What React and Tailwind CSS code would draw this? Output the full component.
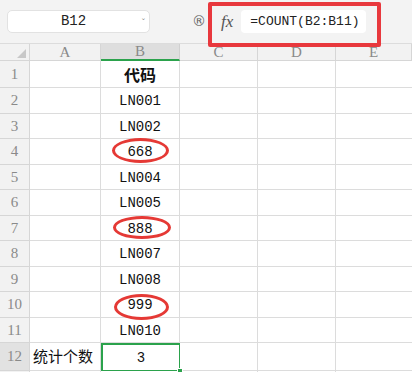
import React from "react";

const rows = [
  { n: "1", a: "", b: "代码", bold: true },
  { n: "2", a: "", b: "LN001" },
  { n: "3", a: "", b: "LN002" },
  { n: "4", a: "", b: "668" },
  { n: "5", a: "", b: "LN004" },
  { n: "6", a: "", b: "LN005" },
  { n: "7", a: "", b: "888" },
  { n: "8", a: "", b: "LN007" },
  { n: "9", a: "", b: "LN008" },
  { n: "10", a: "", b: "999" },
  { n: "11", a: "", b: "LN010" },
  { n: "12", a: "统计个数", b: "3", sel: true },
];

const mono = { fontFamily: '"Liberation Mono", "DejaVu Sans Mono", monospace' };
const serif = { fontFamily: '"Liberation Serif", "DejaVu Serif", serif' };
const cjk = { fontFamily: '"Noto Sans CJK SC", "Noto Sans", sans-serif' };

function HeaderCell({ children, active }) {
  return (
    <div
      className={
        "flex items-center justify-center border-r border-b text-[15px] text-[#8a8a8a] " +
        (active
          ? "bg-[#dedede] border-b-2 border-b-[#2ba24c] border-r-[#d0d0d0]"
          : "bg-[#f2f2f2] border-[#d6d6d6]")
      }
      style={serif}
    >
      {children}
    </div>
  );
}

export default function App() {
  return (
    <div className="relative w-[412px] h-[372px] overflow-hidden bg-white">
      {/* toolbar */}
      <div className="h-[44px] bg-[#f3f3f3] flex items-center border-b border-[#dcdcdc]">
        <div className="ml-[7px] w-[143px] h-[23px] bg-white rounded-[5px] border border-[#e2e2e2] flex items-center relative">
          <span className="flex-1 text-center text-[14px] text-[#222] pr-[10px]" style={mono}>
            B12
          </span>
          <span className="absolute right-[4px] top-[8px] text-[8px] text-[#888] leading-none">ˇ</span>
        </div>
        <span className="ml-[42px] text-[14px] text-[#666]" style={{ fontFamily: '"DejaVu Sans", sans-serif' }}>
          ®
        </span>
        <span className="ml-[15px] italic text-[17px] text-[#555]" style={serif}>
          fx
        </span>
        <div className="ml-[8px] w-[125px] h-[23px] bg-white rounded-[4px] flex items-center pl-[9px]">
          <span className="text-[13px] text-[#222] whitespace-nowrap" style={mono}>
            =COUNT(B2:B11)
          </span>
        </div>
      </div>

      {/* grid */}
      <div className="grid grid-cols-[30px_71px_79px_78px_78px_1fr] grid-rows-[17px_27px_26px_25px_26px_25px_26px_25px_26px_25px_26px_25px_28px_20px]">
        <div className="bg-[#f2f2f2] border-r border-b border-[#d6d6d6] relative">
          <div className="absolute right-[3px] bottom-[2px] w-0 h-0 border-l-[9px] border-l-transparent border-b-[9px] border-b-[#c8c8c8]" />
        </div>
        <HeaderCell>A</HeaderCell>
        <HeaderCell active>B</HeaderCell>
        <HeaderCell>C</HeaderCell>
        <HeaderCell>D</HeaderCell>
        <HeaderCell>E</HeaderCell>

        {rows.map((r) => (
          <React.Fragment key={r.n}>
            <div
              className={
                "flex items-center justify-center border-r border-b border-[#d6d6d6] text-[15px] text-[#8a8a8a] " +
                (r.sel ? "bg-[#e2e2e2]" : "bg-[#f2f2f2]")
              }
              style={serif}
            >
              {r.n}
            </div>
            <div className="flex items-center pl-[3px] border-r border-b border-[#dcdcdc] text-[15px] text-[#111]" style={cjk}>
              {r.a}
            </div>
            <div
              className={
                "relative flex items-center justify-center border-r border-b text-[14px] text-[#111] " +
                (r.sel ? "border-2 border-[#2ba24c]" : "border-[#dcdcdc]")
              }
              style={r.bold ? cjk : mono}
            >
              <span className={r.bold ? "font-bold text-[16px]" : "pt-[2px]"}>{r.b}</span>
              {r.sel && (
                <div className="absolute right-[-4px] bottom-[-4px] w-[6px] h-[6px] bg-[#2ba24c] border border-white" />
              )}
            </div>
            <div className="border-r border-b border-[#dcdcdc]" />
            <div className="border-r border-b border-[#dcdcdc]" />
            <div className="border-b border-[#dcdcdc]" />
          </React.Fragment>
        ))}
        <div className="bg-[#f2f2f2] border-r border-[#d6d6d6]" />
        <div className="border-r border-[#dcdcdc]" />
        <div className="border-r border-[#dcdcdc]" />
        <div className="border-r border-[#dcdcdc]" />
        <div className="border-r border-[#dcdcdc]" />
        <div />
      </div>

      {/* annotations */}
      <div className="absolute left-[208px] top-[2px] w-[173px] h-[45px] border-[4px] border-[#e8383d] rounded-[2px]" />
      <div className="absolute left-[112px] top-[138px] w-[57px] h-[25px] border-[3px] border-[#e53935] rounded-[50%]" />
      <div className="absolute left-[113px] top-[216px] w-[58px] h-[23px] border-[3px] border-[#e53935] rounded-[50%]" />
      <div className="absolute left-[114px] top-[294px] w-[55px] h-[26px] border-[3px] border-[#e53935] rounded-[50%]" />
    </div>
  );
}
